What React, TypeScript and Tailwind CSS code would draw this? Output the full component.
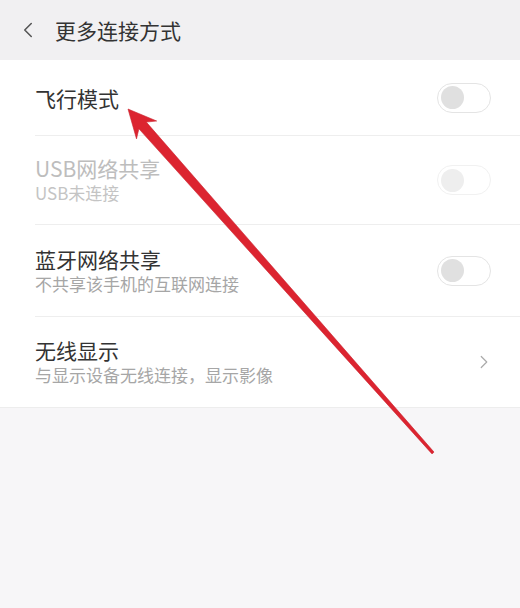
import { ChevronLeft, ChevronRight } from "lucide-react";

type Row = {
  title: string;
  sub?: string;
  h: string;
  disabled?: boolean;
  kind: "toggle" | "link";
};

const rows: Row[] = [
  { title: "飞行模式", h: "h-[76px]", kind: "toggle" },
  { title: "USB网络共享", sub: "USB未连接", h: "h-[89px]", disabled: true, kind: "toggle" },
  { title: "蓝牙网络共享", sub: "不共享该手机的互联网连接", h: "h-[92px]", kind: "toggle" },
  { title: "无线显示", sub: "与显示设备无线连接，显示影像", h: "h-[90px]", kind: "link" },
];

function Toggle({ disabled }: { disabled?: boolean }) {
  return (
    <div
      className={
        "flex h-[30px] w-[54px] items-center rounded-full border bg-white px-[3px] " +
        (disabled ? "border-[#f1f1f1]" : "border-[#e4e4e4]")
      }
    >
      <div
        className={
          "size-[23px] rounded-full " + (disabled ? "bg-[#eeeeee]" : "bg-[#e0e0e0]")
        }
      />
    </div>
  );
}

function Arrow() {
  return (
    <svg
      className="pointer-events-none absolute left-0 top-0"
      width="520"
      height="608"
      viewBox="0 0 520 608"
    >
      <polygon
        points="128,109 156.7,121 146.3,122.1 434,452.1 432,453.9 138.9,128.8 136.5,138.9"
        fill="#dc2430"
        stroke="#c92530"
        strokeWidth="0.6"
        strokeLinejoin="round"
      />
    </svg>
  );
}

export default function App() {
  return (
    <div
      className="relative flex h-[608px] w-[520px] flex-col overflow-hidden bg-[#f7f6f8]"
      style={{ fontFamily: '"Noto Sans CJK SC", "Noto Sans", sans-serif' }}
    >
      <header className="flex h-[60px] shrink-0 items-center bg-[#f1f0f2] pl-[15px]">
        <ChevronLeft className="size-[26px] text-[#555]" strokeWidth={1.4} />
        <span className="ml-[14px] text-[21px] leading-none text-[#333]">更多连接方式</span>
      </header>

      <ul className="border-b border-[#ededed] bg-white">
        {rows.map((r, i) => (
          <li key={r.title} className="pl-[35px]">
            <div
              className={
                "flex items-center pr-[29px] " +
                r.h +
                (i < rows.length - 1 ? " border-b border-[#eeeeee]" : "")
              }
            >
              <div className="min-w-0 flex-1">
                <p
                  className={
                    "text-[21px] leading-[26px] " +
                    (r.disabled ? "text-[#bdbdbd]" : "text-[#333]")
                  }
                >
                  {r.title}
                </p>
                {r.sub && (
                  <p
                    className={
                      "text-[17px] leading-[24px] " +
                      (r.disabled ? "text-[#c4c4c4]" : "text-[#a6a6a6]")
                    }
                  >
                    {r.sub}
                  </p>
                )}
              </div>
              {r.kind === "toggle" ? (
                <Toggle disabled={r.disabled} />
              ) : (
                <ChevronRight className="mr-[-4px] size-[22px] text-[#aaa]" strokeWidth={1.3} />
              )}
            </div>
          </li>
        ))}
      </ul>

      <div className="flex-1" />
      <Arrow />
    </div>
  );
}
